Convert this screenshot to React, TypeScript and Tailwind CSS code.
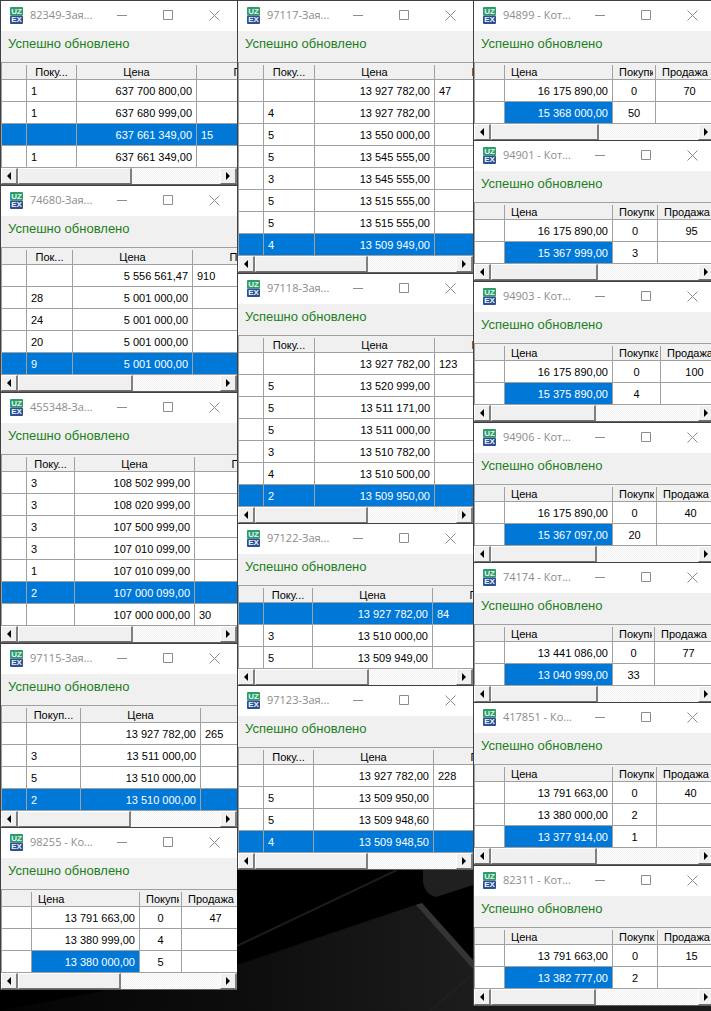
type Row = [buy: string, price: string, sell: string];

interface QuoteWindow {
  title: string;
  kind: 'order' | 'quote';
  buyLabel?: string;
  buyWidth: number;
  thumb: number;
  selected: number;
  overlap?: boolean; // shares its top border with the window above
  rows: Row[];
}

const left: QuoteWindow[] = [
  {
    title: '82349-Зая...', kind: 'order', buyLabel: 'Поку...', buyWidth: 50, thumb: 114, selected: 2,
    rows: [['1', '637 700 800,00', ''], ['1', '637 680 999,00', ''], ['', '637 661 349,00', '15'], ['1', '637 661 349,00', '']],
  },
  {
    title: '74680-Зая...', kind: 'order', buyLabel: 'Пок...', buyWidth: 46, thumb: 115, selected: 4,
    rows: [['', '5 556 561,47', '910'], ['28', '5 001 000,00', ''], ['24', '5 001 000,00', ''], ['20', '5 001 000,00', ''], ['9', '5 001 000,00', '']],
  },
  {
    title: '455348-За...', kind: 'order', buyLabel: 'Поку...', buyWidth: 48, thumb: 115, selected: 5,
    rows: [
      ['3', '108 502 999,00', ''], ['3', '108 020 999,00', ''], ['3', '107 500 999,00', ''], ['3', '107 010 099,00', ''],
      ['1', '107 010 099,00', ''], ['2', '107 000 099,00', ''], ['', '107 000 000,00', '30'],
    ],
  },
  {
    title: '97115-Зая...', kind: 'order', buyLabel: 'Покуп...', buyWidth: 54, thumb: 113, selected: 3,
    rows: [['', '13 927 782,00', '265'], ['3', '13 511 000,00', ''], ['5', '13 510 000,00', ''], ['2', '13 510 000,00', '']],
  },
  {
    title: '98255 - Ко...', kind: 'quote', buyWidth: 42, thumb: 103, selected: 2, overlap: true,
    rows: [['0', '13 791 663,00', '47'], ['4', '13 380 999,00', ''], ['5', '13 380 000,00', '']],
  },
];

const middle: QuoteWindow[] = [
  {
    title: '97117-Зая...', kind: 'order', buyLabel: 'Поку...', buyWidth: 51, thumb: 113, selected: 7,
    rows: [
      ['', '13 927 782,00', '47'], ['4', '13 927 782,00', ''], ['5', '13 550 000,00', ''], ['5', '13 545 555,00', ''],
      ['3', '13 545 555,00', ''], ['5', '13 515 555,00', ''], ['5', '13 515 555,00', ''], ['4', '13 509 949,00', ''],
    ],
  },
  {
    title: '97118-Зая...', kind: 'order', buyLabel: 'Поку...', buyWidth: 51, thumb: 113, selected: 6,
    rows: [
      ['', '13 927 782,00', '123'], ['5', '13 520 999,00', ''], ['5', '13 511 171,00', ''], ['5', '13 511 000,00', ''],
      ['3', '13 510 782,00', ''], ['4', '13 510 500,00', ''], ['2', '13 509 950,00', ''],
    ],
  },
  {
    title: '97122-Зая...', kind: 'order', buyLabel: 'Поку...', buyWidth: 49, thumb: 114, selected: 0, overlap: true,
    rows: [['', '13 927 782,00', '84'], ['3', '13 510 000,00', ''], ['5', '13 509 949,00', '']],
  },
  {
    title: '97123-Зая...', kind: 'order', buyLabel: 'Поку...', buyWidth: 50, thumb: 113, selected: 3, overlap: true,
    rows: [['', '13 927 782,00', '228'], ['5', '13 509 950,00', ''], ['5', '13 509 948,60', ''], ['4', '13 509 948,50', '']],
  },
];

const right: QuoteWindow[] = [
  {
    title: '94899 - Кот...', kind: 'quote', buyWidth: 43, thumb: 108, selected: 1,
    rows: [['0', '16 175 890,00', '70'], ['50', '15 368 000,00', '']],
  },
  {
    title: '94901 - Кот...', kind: 'quote', buyWidth: 45, thumb: 107, selected: 1, overlap: true,
    rows: [['0', '16 175 890,00', '95'], ['3', '15 367 999,00', '']],
  },
  {
    title: '94903 - Кот...', kind: 'quote', buyWidth: 48, thumb: 105, selected: 1,
    rows: [['0', '16 175 890,00', '100'], ['4', '15 375 890,00', '']],
  },
  {
    title: '94906 - Кот...', kind: 'quote', buyWidth: 44, thumb: 106, selected: 1,
    rows: [['0', '16 175 890,00', '40'], ['20', '15 367 097,00', '']],
  },
  {
    title: '74174 - Кот...', kind: 'quote', buyWidth: 42, thumb: 107, selected: 1, overlap: true,
    rows: [['0', '13 441 086,00', '77'], ['33', '13 040 999,00', '']],
  },
  {
    title: '417851 - Ко...', kind: 'quote', buyWidth: 44, thumb: 106, selected: 2, overlap: true,
    rows: [['0', '13 791 663,00', '40'], ['2', '13 380 000,00', ''], ['1', '13 377 914,00', '']],
  },
  {
    title: '82311 - Кот...', kind: 'quote', buyWidth: 45, thumb: 105, selected: 1,
    rows: [['0', '13 791 663,00', '15'], ['2', '13 382 777,00', '']],
  },
];

function Logo() {
  return (
    <svg width="13" height="17" viewBox="0 0 13 17" className="shrink-0" aria-hidden="true">
      <rect width="13" height="8.5" rx="1" fill="#2c9c68" />
      <rect y="8.5" width="13" height="8.5" rx="1" fill="#2f4f93" />
      <g fill="#e6f5f2" fontFamily="Liberation Sans, sans-serif" fontWeight="bold" fontSize="8" textAnchor="middle">
        <text x="6.5" y="7.2">UZ</text>
        <text x="6.5" y="15.4">EX</text>
      </g>
    </svg>
  );
}

function TitleBar({ title }: { title: string }) {
  const button = 'flex h-full w-[46px] items-center justify-center';
  return (
    <header className="flex h-[30px] items-center bg-white pb-0.5 pl-[9px] text-[#8c8c8c]">
      <Logo />
      <h2 className="ml-[7px] min-w-0 flex-1 whitespace-nowrap font-['Open_Sans','Noto_Sans',sans-serif] text-[11px] leading-4">{title}</h2>
      <div className="flex h-full shrink-0">
        <button type="button" aria-label="Свернуть" className={button}>
          <svg width="11" height="11" viewBox="0 0 11 11" stroke="currentColor" fill="none"><path d="M0 5.5h10" /></svg>
        </button>
        <button type="button" aria-label="Развернуть" className={button}>
          <svg width="11" height="11" viewBox="0 0 11 11" stroke="currentColor" fill="none"><path d="M.5 .5h9v9h-9z" /></svg>
        </button>
        <button type="button" aria-label="Закрыть" className={button}>
          <svg width="11" height="11" viewBox="0 0 11 11" stroke="currentColor" fill="none"><path d="M.5 .5l10 10M10.5 .5l-10 10" /></svg>
        </button>
      </div>
    </header>
  );
}

function HeaderCell({ label, centered }: { label: string; centered: boolean }) {
  return (
    <th scope="col" className="h-[17px] overflow-hidden border-b border-[#a0a0a0] bg-[#f0f0f0] p-0 pt-0.5 font-normal">
      <div className="h-[14px] border-r border-[#a0a0a0] px-0.5 leading-[14px]">
        <div className={`overflow-hidden whitespace-nowrap ${centered ? 'text-center' : 'pl-1 text-left'}`}>{label}</div>
      </div>
    </th>
  );
}

function Grid({ win }: { win: QuoteWindow }) {
  const order = win.kind === 'order';
  const widths = order ? [25, win.buyWidth, 120, 120] : [30, 108, win.buyWidth, 68];
  const labels = order ? ['', win.buyLabel ?? '', 'Цена', 'Продажа'] : ['', 'Цена', 'Покупка', 'Продажа'];
  const total = widths.reduce((sum, w) => sum + w, 0);
  const cell = 'h-[22px] border-b border-r border-[#a0a0a0] px-1 py-0';

  return (
    <div className="overflow-hidden border-l border-t border-[#a0a0a0] bg-white">
      <table className="table-fixed border-separate border-spacing-0 text-[11px] leading-4 text-black" style={{ width: total }}>
        <colgroup>
          {widths.map((w, i) => (
            <col key={i} style={{ width: w }} />
          ))}
        </colgroup>
        <thead>
          <tr>
            {labels.map((label, i) => (
              <HeaderCell key={i} label={label} centered={order} />
            ))}
          </tr>
        </thead>
        <tbody>
          {win.rows.map(([buy, price, sell], i) => {
            const active = i === win.selected;
            if (order) {
              return (
                <tr key={i} className={active ? 'bg-[#0078d7] text-white' : ''}>
                  <td className={cell} />
                  <td className={cell}>{buy}</td>
                  <td className={`${cell} text-right`}>{price}</td>
                  <td className={cell}>{sell}</td>
                </tr>
              );
            }
            return (
              <tr key={i}>
                <td className={cell} />
                <td className={`${cell} text-right ${active ? 'bg-[#0078d7] text-white' : ''}`}>{price}</td>
                <td className={`${cell} text-center`}>{buy}</td>
                <td className={`${cell} text-center`}>{sell}</td>
              </tr>
            );
          })}
        </tbody>
      </table>
    </div>
  );
}

function ScrollBar({ thumb }: { thumb: number }) {
  const bevel = 'border-b border-r-2 border-l border-t border-b-[#707070] border-l-white border-r-[#808080] border-t-white bg-[#f0f0f0]';
  return (
    <div className="flex h-4 bg-[repeating-conic-gradient(#ffffff_0_25%,#f0f0f0_0_50%)] bg-[length:2px_2px]">
      <button type="button" aria-label="Прокрутить влево" className={`flex w-[17px] items-center justify-center ${bevel}`}>
        <svg width="4" height="8" viewBox="0 0 4 8"><path d="M4 0v8L0 4z" /></svg>
      </button>
      <div className={bevel} style={{ width: thumb }} />
      <button type="button" aria-label="Прокрутить вправо" className={`ml-auto flex w-[17px] items-center justify-center ${bevel}`}>
        <svg width="4" height="8" viewBox="0 0 4 8"><path d="M0 0v8l4-4z" /></svg>
      </button>
    </div>
  );
}

function Column({ windows }: { windows: QuoteWindow[] }) {
  return (
    <div className="min-w-0">
      {windows.map((win) => (
        <section
          key={win.title}
          className={`relative border-l border-t border-[#404040] bg-[#f0f0f0] ${win.overlap ? '-mt-px' : ''}`}
        >
          <TitleBar title={win.title} />
          <p className="h-[31px] pl-[7px] pt-[5px] text-[13px] leading-4 text-[#1c7f1c]">Успешно обновлено</p>
          <Grid win={win} />
          <div className="border-b border-[#606060]">
            <ScrollBar thumb={win.thumb} />
          </div>
        </section>
      ))}
    </div>
  );
}

function Wallpaper() {
  return (
    <svg className="absolute bottom-0 left-0 h-[141px] w-full" viewBox="0 870 711 141" preserveAspectRatio="none" aria-hidden="true">
      <defs>
        <linearGradient id="slab" x1="0" y1="0" x2="1" y2="0">
          <stop offset="0" stopColor="#040404" />
          <stop offset="0.5" stopColor="#0e0e0e" />
          <stop offset="1" stopColor="#1f1f1f" />
        </linearGradient>
      </defs>
      <path d="M0 1011L237 965L418 904L473 968L510 1011z" fill="url(#slab)" />
      <path d="M423 870v12q2 13 13 15l37-12v-15z" fill="#202020" />
      <path d="M416 905l6-2l51 57v9z" fill="#353535" />
      <path d="M237 946L397 870" stroke="#1c1c1c" strokeWidth="2" />
      <path d="M430 1011L473 974" stroke="#262626" />
      <path d="M473 1004h238v7H473z" fill="#1a1a1a" />
    </svg>
  );
}

export default function App() {
  return (
    <main className="relative min-h-screen overflow-hidden bg-black font-['Liberation_Sans',Arial,sans-serif]">
      <Wallpaper />
      <div className="relative grid w-[calc(100%+4px)] grid-cols-[237fr_236fr_242fr] items-start">
        <Column windows={left} />
        <Column windows={middle} />
        <Column windows={right} />
      </div>
    </main>
  );
}
